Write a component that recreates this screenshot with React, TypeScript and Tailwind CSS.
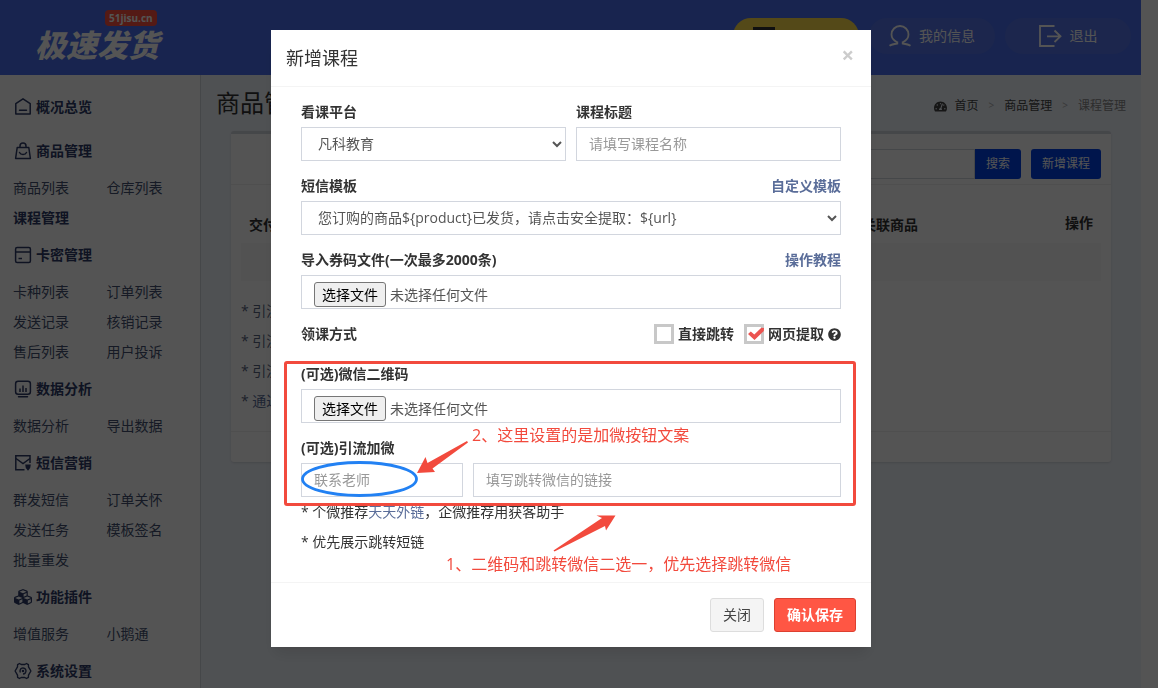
import React, { useRef, useState } from "react";
import { FaCubes, FaQuestionCircle, FaTachometerAlt } from "react-icons/fa";

const FONT =
  "font-['Open_Sans','Noto_Sans_CJK_SC',sans-serif]";

const HomeIcon = () => (
  <svg viewBox="0 0 18 18" className="h-[18px] w-[18px]" fill="none" stroke="currentColor" strokeWidth="1.5" strokeLinejoin="round">
    <path d="M1.8 5.6 9 0.8l7.2 4.800v10.400H1.800z" />
    <path d="M5.500 12.300h7" strokeLinecap="round" />
  </svg>
);

const BagIcon = () => (
  <svg viewBox="0 0 18 18" className="h-[18px] w-[18px]" fill="none" stroke="currentColor" strokeWidth="1.5" strokeLinejoin="round">
    <path d="M3.200 5.500h11.600l1.600 11H1.600z" />
    <path d="M6 5.200V4a3 3 0 0 1 6 0v1.200" />
    <path d="M5.500 10.500c1.200 2.600 5.800 2.600 7 0" strokeLinecap="round" />
  </svg>
);

const CardIcon = () => (
  <svg viewBox="0 0 18 18" className="h-[18px] w-[18px]" fill="none" stroke="currentColor" strokeWidth="1.5">
    <rect x="1.6" y="1.6" width="14.8" height="14.8" rx="1.5" />
    <path d="M1.6 6h14.8M4.5 12.5H8" />
  </svg>
);

const ChartIcon = () => (
  <svg viewBox="0 0 18 18" className="h-[18px] w-[18px]" fill="none" stroke="currentColor" strokeWidth="1.5">
    <rect x="1.6" y="1.2" width="14.8" height="13" rx="2.5" />
    <path d="M6 12V8.5M9 12V5.5M12 12V8" />
    <path d="M4.5 16.8h9" strokeLinecap="round" />
  </svg>
);

const MailIcon = () => (
  <svg viewBox="0 0 18 18" className="h-[18px] w-[18px]" fill="none" stroke="currentColor" strokeWidth="1.5">
    <path d="M16 9V1.800H1.800v14h8.700" />
    <path d="m2 4.500 7 5 7-5" />
    <path d="M11.200 10.500h5.600l-.6 3.500-2.200 2.800-2.200-2.800z" fill="currentColor" stroke="none" />
  </svg>
);

const GearIcon = () => (
  <svg viewBox="0 0 18 18" className="h-[18px] w-[18px]" fill="none" stroke="currentColor" strokeWidth="1.4" strokeLinejoin="round">
    <path d="M5.500 1.500 7.200 2.500h3.600l1.700-1 1.900 1.200.1 2.200L16.900 9l-2.400 4.100-.1 2.200-1.900 1.200-1.700-1H7.200l-1.700 1-1.900-1.200-.1-2.200L1.100 9l2.400-4.100.1-2.200z" />
    <path d="M6.400 10.500A3 3 0 1 1 9 12" />
    <circle cx="9" cy="9" r="0.600" />
  </svg>
);

const UserIcon = () => (
  <svg viewBox="0 0 22 22" className="h-[22px] w-[22px]" fill="none" stroke="currentColor" strokeWidth="1.8">
    <path d="M0.500 20.800c2-1.400 4.500-1.800 7.800-2.300v-1.300C4.500 15.500 2.500 13 2.500 9.500a8.500 8.500 0 0 1 17 0c0 3.500-2 6-5.800 7.700v1.300c3.300.5 5.800.9 7.800 2.300" />
  </svg>
);

const LogoutIcon = () => (
  <svg viewBox="0 0 23 22" className="h-[22px] w-[23px]" fill="none" stroke="currentColor" strokeWidth="1.8">
    <path d="M15.500 1H1v20h14.500" />
    <path d="M8 11.300h13.500M15.500 5.500l6 5.800-6 5.700" />
  </svg>
);

const menu = [
  { title: "概况总览", icon: <HomeIcon />, links: [] },
  { title: "商品管理", icon: <BagIcon />, links: ["商品列表", "仓库列表", "课程管理"] },
  {
    title: "卡密管理",
    icon: <CardIcon />,
    links: ["卡种列表", "订单列表", "发送记录", "核销记录", "售后列表", "用户投诉"],
  },
  { title: "数据分析", icon: <ChartIcon />, links: ["数据分析", "导出数据"] },
  {
    title: "短信营销",
    icon: <MailIcon />,
    links: ["群发短信", "订单关怀", "发送任务", "模板签名", "批量重发"],
  },
  { title: "功能插件", icon: <FaCubes className="h-[18px] w-[18px]" />, links: ["增值服务", "小鹅通"] },
  { title: "系统设置", icon: <GearIcon />, links: [] },
];

const Header = () => (
  <header className="flex h-[75px] items-start justify-between bg-[#4a6eee] pr-[10px] text-white">
    <a href="#" className="relative ml-[35px] mt-[30px] block text-[31px] leading-[30px] font-black italic">
      极速发货
      <span className="absolute -top-5 left-[70px] rounded bg-[#ff5040] px-1 text-[10px] leading-4 font-bold not-italic">
        51jisu.cn
      </span>
    </a>
    <nav className="mt-[18px] flex gap-[10px] text-sm">
      <a href="#" aria-label="消息" className="flex h-9 w-[126px] items-center rounded-full bg-[#ffdc4a] pl-5">
        <span className="h-[18px] w-[22px] bg-[#333]" />
      </a>
      <a href="#" className="flex h-9 w-[126px] items-center justify-center gap-2 rounded-full bg-[#5675e8]">
        <UserIcon />
        我的信息
      </a>
      <a href="#" className="flex h-9 w-[126px] items-center justify-center gap-2 rounded-full bg-[#5675e8]">
        <LogoutIcon />
        退出
      </a>
    </nav>
  </header>
);

const Sidebar = () => (
  <aside className="w-[201px] shrink-0 border-r border-[#d2d6de] bg-white pt-[10px] text-sm text-[#435070]">
    {menu.map((group) => (
      <section key={group.title}>
        <h2 className="flex h-11 items-center gap-1 pl-[14px] font-bold text-[#2e3c68]">
          {group.icon}
          {group.title}
        </h2>
        {group.links.length > 0 && (
          <ul className="grid grid-cols-2 pl-[13px]">
            {group.links.map((link) => (
              <li key={link} className="h-[30px] leading-[30px]">
                <a href="#" className={link === "课程管理" ? "font-bold text-[#2e3c68]" : ""}>
                  {link}
                </a>
              </li>
            ))}
          </ul>
        )}
      </section>
    ))}
  </aside>
);

const CoursePage = () => (
  <main className="min-w-0 flex-1 bg-[#f0f5fc] text-[#333]">
    <div className="flex h-14 items-center justify-between px-[15px]">
      <h1 className="text-2xl">商品管理</h1>
      <nav className="flex items-center gap-2 pt-[6px] text-xs text-[#444]">
        <FaTachometerAlt className="h-[13px] w-[13px]" />
        <a href="#">首页</a>
        <span className="px-[2px] text-[10px] text-[#aaa]">&gt;</span>
        <a href="#">商品管理</a>
        <span className="px-[2px] text-[10px] text-[#aaa]">&gt;</span>
        <span className="text-[#888]">课程管理</span>
      </nav>
    </div>
    <div className="mx-[30px] rounded-[3px] border-t-[3px] border-[#d2d6de] bg-white shadow">
      <div className="flex h-[51px] items-center justify-end border-b border-[#f0f0f0] px-[10px] pt-[10px] text-xs">
        <input type="text" aria-label="搜索" className="h-[30px] w-[200px] border border-[#d2d6de] px-2" />
        <button className="mr-[10px] h-[30px] rounded-r-[3px] bg-[#0042e6] px-[11px] text-white">搜索</button>
        <button className="h-[30px] rounded-[3px] bg-[#0042e6] px-[11px] text-white">新增课程</button>
      </div>
      <div className="px-[10px] pt-[18px]">
        <table className="w-full text-left text-sm">
          <thead>
            <tr className="h-10">
              <th className="w-[621px] pt-1 pl-2">交付</th>
              <th className="pt-1">关联商品</th>
              <th className="pr-2 text-right">操作</th>
            </tr>
          </thead>
          <tbody>
            <tr className="h-[38px] bg-[#f8f8f8]">
              <td colSpan={3} />
            </tr>
          </tbody>
        </table>
        <div className="py-[15px] text-sm leading-[30px] text-[#5a6480]">
          <p>* 引流</p>
          <p>* 引流</p>
          <p>* 引流</p>
          <p>
            * <a href="#" className="text-[#5a6d99]">通过</a>
          </p>
        </div>
      </div>
      <div className="h-[31px] border-t border-[#f0f0f0]" />
    </div>
  </main>
);

const fieldClass =
  "h-[34px] w-full border border-[#d2d6de] bg-white px-3 pb-[2px] text-sm text-[#555] placeholder:text-[#999]";

const FileField = ({ id }: { id: string }) => {
  const ref = useRef<HTMLInputElement>(null);
  const [name, setName] = useState("未选择任何文件");

  return (
    <div className="flex h-[34px] items-start gap-1 border border-[#d2d6de] px-3 pt-[6px] text-sm text-[#555]">
      <input
        id={id}
        ref={ref}
        type="file"
        className="hidden"
        onChange={(e) => setName(e.target.files?.[0]?.name ?? "未选择任何文件")}
      />
      <button
        type="button"
        onClick={() => ref.current?.click()}
        className="h-[25px] rounded-[3px] border border-[#767676] bg-[#efefef] px-[7px] leading-[23px] text-black"
      >
        选择文件
      </button>
      <span className="leading-[25px]">{name}</span>
    </div>
  );
};

const CheckOption = ({ label, defaultChecked = false }: { label: string; defaultChecked?: boolean }) => (
  <label className="flex items-center gap-1">
    <span className="relative h-5 w-5">
      <input
        type="checkbox"
        defaultChecked={defaultChecked}
        className="peer block h-5 w-5 appearance-none border-[3px] border-[#c8c8c8] bg-white"
      />
      <svg
        viewBox="0 0 20 20"
        className="pointer-events-none absolute inset-0 hidden h-5 w-5 peer-checked:block"
        fill="#ec5350"
      >
        <path d="M4 10 6.800 7.600 10.300 10.600 17.300 3.800 20 4 19.800 7 10.500 16z" />
      </svg>
    </span>
    {label}
  </label>
);

// 标注层：红框、箭头、说明文字
const Annotations = () => (
  <div className="pointer-events-none absolute inset-0 text-base leading-6 text-[#f24a3d]">
    <div className="absolute top-[331px] left-[13px] h-[145px] w-[572px] rounded-[3px] border-[3px] border-[#f24a3d]" />
    <svg viewBox="0 0 600 617" className="absolute inset-0 h-[617px] w-[600px]">
      <ellipse cx="88.500" cy="449" rx="57" ry="16.500" fill="none" stroke="#2281f3" strokeWidth="2.800" />
      <path d="M146 443 154.500 427 156.500 433 196 411 197 412.500 161.500 438.500 164 442z" fill="#f24a3d" />
      <path d="M344.500 485.500 325.500 485.500 331 488 282.500 520.500 283.500 521.500 334 496 335 500.500z" fill="#f24a3d" />
    </svg>
    <p className="absolute top-[393px] left-[201px] whitespace-nowrap">2、这里设置的是加微按钮文案</p>
    <p className="absolute top-[522px] left-[175px] whitespace-nowrap">
      1、二维码和跳转微信二选一，优先选择跳转微信
    </p>
  </div>
);

const CourseModal = () => (
  <div
    role="dialog"
    aria-labelledby="modal-title"
    className="relative mt-[30px] w-[600px] self-start bg-white text-[#333] shadow-lg"
  >
    <div className="flex h-[57px] items-center justify-between border-b border-[#f4f4f4] px-[15px]">
      <h4 id="modal-title" className="text-lg">新增课程</h4>
      <button aria-label="关闭" className="pr-[2px] pb-2 text-[22px] leading-5 font-bold text-[#ccc]">×</button>
    </div>

    <form className="px-[30px] pt-[15px] pb-[25px] text-sm leading-5">
      <div className="mb-[15px] grid grid-cols-2 gap-[10px]">
        <div>
          <label htmlFor="platform" className="mb-[5px] block font-bold">看课平台</label>
          <select id="platform" className={fieldClass}>
            <option>凡科教育</option>
          </select>
        </div>
        <div>
          <label htmlFor="title" className="mb-[5px] block font-bold">课程标题</label>
          <input id="title" type="text" placeholder="请填写课程名称" className={fieldClass} />
        </div>
      </div>

      <div className="mb-[15px]">
        <div className="mb-[5px] flex justify-between font-bold">
          <label htmlFor="sms">短信模板</label>
          <a href="#" className="text-[#5a6d99]">自定义模板</a>
        </div>
        <select id="sms" className={fieldClass}>
          <option>{"您订购的商品${product}已发货，请点击安全提取：${url}"}</option>
        </select>
      </div>

      <div className="mb-[15px]">
        <div className="mb-[5px] flex justify-between font-bold">
          <label htmlFor="codes">导入券码文件(一次最多2000条)</label>
          <a href="#" className="text-[#5a6d99]">操作教程</a>
        </div>
        <FileField id="codes" />
      </div>

      <div className="mb-5 flex items-center justify-between font-bold">
        <span>领课方式</span>
        <div className="flex items-center">
          <CheckOption label="直接跳转" />
          <div className="ml-[10px] flex items-center gap-1">
            <CheckOption label="网页提取" defaultChecked />
            <FaQuestionCircle className="h-[13px] w-[13px]" />
          </div>
        </div>
      </div>

      <div className="mb-[15px]">
        <label htmlFor="qrcode" className="mb-[5px] block font-bold">(可选)微信二维码</label>
        <FileField id="qrcode" />
      </div>

      <label htmlFor="wx-text" className="mb-[5px] block font-bold">(可选)引流加微</label>
      <div className="flex gap-[10px]">
        <div className="w-[30%] shrink-0">
          <input id="wx-text" type="text" placeholder="联系老师" className={fieldClass} />
        </div>
        <input type="text" aria-label="跳转链接" placeholder="填写跳转微信的链接" className={fieldClass} />
      </div>
      <p className="leading-[30px]">
        * 个微推荐<a href="#" className="text-[#5a6d99]">天天外链</a>，企微推荐用获客助手
      </p>
      <p className="leading-[30px]">* 优先展示跳转短链</p>
    </form>

    <div className="flex justify-end gap-[10px] border-t border-[#f4f4f4] p-[15px] text-sm">
      <button className="h-[34px] rounded-[3px] border border-[#ddd] bg-[#f4f4f4] px-3 text-[#444]">关闭</button>
      <button className="h-[34px] rounded-[3px] border border-[#dd4030] bg-[#ff5644] px-3 font-bold text-white">
        确认保存
      </button>
    </div>

    <Annotations />
  </div>
);

export default function App() {
  return (
    <div className={`${FONT} h-screen overflow-hidden bg-white pr-[17px]`}>
      <div className="flex min-h-full flex-col">
        <Header />
        <div className="flex flex-1">
          <Sidebar />
          <CoursePage />
        </div>
      </div>
      <div className="fixed inset-0 flex justify-center overflow-hidden bg-black/67 pr-4">
        <CourseModal />
      </div>
    </div>
  );
}
